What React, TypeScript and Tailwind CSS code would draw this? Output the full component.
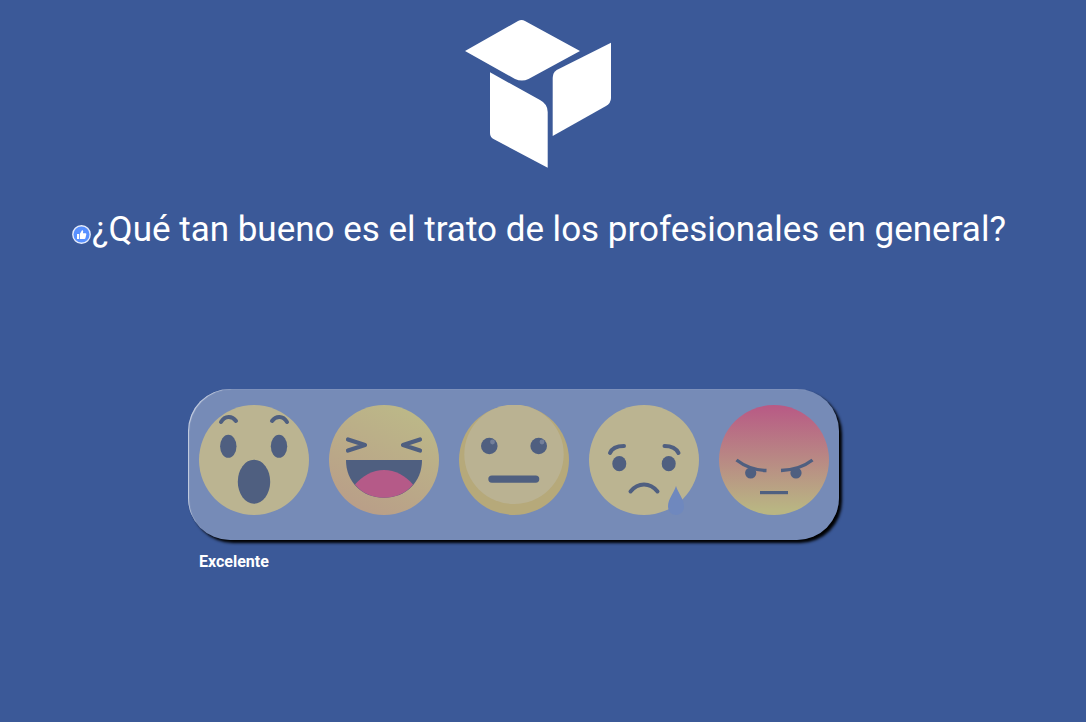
const INK = "#4f5f80";

function Wow() {
  return (
    <svg width="110" height="110" viewBox="0 0 110 110">
      <circle cx="55" cy="55" r="55" fill="#bbb491" />
      <path d="M22 17 C26 10.5 33 10.5 37 16" fill="none" stroke={INK} strokeWidth="4" strokeLinecap="round" />
      <path d="M73 16 C77 10.5 84 10.5 88 17" fill="none" stroke={INK} strokeWidth="4" strokeLinecap="round" />
      <ellipse cx="29.3" cy="41.3" rx="8.2" ry="11.5" fill={INK} />
      <ellipse cx="80" cy="41.3" rx="8.2" ry="11.5" fill={INK} />
      <ellipse cx="55" cy="76.7" rx="16.2" ry="22" fill={INK} />
    </svg>
  );
}

function Haha() {
  return (
    <svg width="110" height="110" viewBox="0 0 110 110">
      <defs>
        <linearGradient id="haha" x1="0.75" y1="0.05" x2="0.3" y2="0.95">
          <stop offset="0" stopColor="#bcb888" />
          <stop offset="1" stopColor="#b99f88" />
        </linearGradient>
      </defs>
      <circle cx="55" cy="55" r="55" fill="url(#haha)" />
      <path d="M19 34.5 L36 40 L19 45.5" fill="none" stroke={INK} strokeWidth="4.2" strokeLinecap="round" strokeLinejoin="round" />
      <path d="M91 34.5 L74 40 L91 45.5" fill="none" stroke={INK} strokeWidth="4.2" strokeLinecap="round" strokeLinejoin="round" />
      <path d="M17 55 H93 C93 77 77 92.7 55 92.7 C33 92.7 17 77 17 55 Z" fill={INK} />
      <path d="M26 79.5 C33 71 44 65 55 65 C66 65 77 71 84 79.5 C77 88 67 92.7 55 92.7 C43 92.7 33 88 26 79.5 Z" fill="#b55a88" />
    </svg>
  );
}

function Neutral() {
  return (
    <svg width="110" height="110" viewBox="0 0 110 110">
      <circle cx="55" cy="55" r="55" fill="#b6a97a" />
      <circle cx="55" cy="49.3" r="49.7" fill="#bab292" />
      <circle cx="30.3" cy="41" r="8.3" fill={INK} />
      <circle cx="79.7" cy="41" r="8.3" fill={INK} />
      <circle cx="33.5" cy="37" r="2.4" fill="#737f9a" />
      <circle cx="83" cy="37" r="2.4" fill="#737f9a" />
      <rect x="29.3" y="70.5" width="51" height="7.2" rx="3.6" fill={INK} />
    </svg>
  );
}

function Sad() {
  return (
    <svg width="110" height="110" viewBox="0 0 110 110">
      <circle cx="55" cy="55" r="55" fill="#bbb491" />
      <path d="M21 48 C23 43 29 41 35 41" fill="none" stroke={INK} strokeWidth="4" strokeLinecap="round" />
      <path d="M75.5 41 C81 41 87 43 89.5 48" fill="none" stroke={INK} strokeWidth="4" strokeLinecap="round" />
      <ellipse cx="30.3" cy="58.7" rx="7" ry="7.6" fill={INK} />
      <ellipse cx="79.7" cy="58.7" rx="7" ry="7.6" fill={INK} />
      <path d="M41.5 86.5 C46 81 50 79.5 55 79.5 C60 79.5 64 81 68.5 86.5" fill="none" stroke={INK} strokeWidth="4" strokeLinecap="round" />
      <path d="M87 81 C89 88 95 94 95 101.5 C95 106 91.5 110 87 110 C82.5 110 79 106 79 101.5 C79 94 85 88 87 81 Z" fill="#6f88be" />
    </svg>
  );
}

function Angry() {
  return (
    <svg width="110" height="110" viewBox="0 0 110 110">
      <defs>
        <linearGradient id="angry" x1="0" y1="0" x2="0" y2="1">
          <stop offset="0" stopColor="#b85985" />
          <stop offset="0.95" stopColor="#b9b583" />
        </linearGradient>
      </defs>
      <circle cx="55" cy="55" r="55" fill="url(#angry)" />
      <path d="M17.5 55 C24 60 32 65 47.5 65.5" fill="none" stroke={INK} strokeWidth="3.4" />
      <path d="M93.5 55 C87 60 78 65 62 65.5" fill="none" stroke={INK} strokeWidth="3.4" />
      <circle cx="31.7" cy="68" r="5.6" fill={INK} />
      <circle cx="77" cy="68" r="5.6" fill={INK} />
      <rect x="41" y="86" width="28" height="3.2" fill={INK} />
    </svg>
  );
}

export default function App() {
  return (
    <div className="h-[722px] overflow-hidden bg-[#3b5998] font-['Roboto',sans-serif] text-white">
      <div className="ml-[465px] pt-[18px]">
        <svg width="146" height="151" viewBox="0 0 146 151" className="block" fill="#fff">
          <path d="M0 33 L53 3 Q56.7 1.2 60 3 L115 33 L63.5 61 Q57 64 50 61 Z" />
          <path d="M146 24.7 V80 Q146 85 141 88 L87.7 118 V60 Q87.7 54.5 91.7 52 Z" />
          <path d="M25 54.3 L75 82 Q82.7 86 82.7 94 V149.7 L28.5 121 Q25 119 25 115 Z" />
        </svg>
      </div>
      <h1 className="ml-[72px] mt-[39px] flex h-[44px] items-center text-[35px] font-normal leading-[44px]">
        <svg width="19" height="19" viewBox="0 0 19 19" className="mt-[8px] mr-[1px] shrink-0">
          <circle cx="9.5" cy="9.5" r="8.7" fill="#5890ff" stroke="#e6ecfa" strokeWidth="1.4" />
          <path d="M5 9 H7 V14 H5 Z" fill="#fff" />
          <path d="M7.8 9 L10 5.2 Q11.2 5 11.2 6.6 L10.9 8.2 H13.6 Q14.6 8.4 14.3 9.5 L13.4 13.2 Q13.1 14 12.3 14 H7.8 Z" fill="#fff" />
        </svg>
        <span className="whitespace-nowrap">¿Qué tan bueno es el trato de los profesionales en general?</span>
      </h1>
      <div className="ml-[188px] mt-[137px] flex h-[151px] w-[651px] items-start gap-5 rounded-[42px] bg-white/30 pl-[11px] pt-[16px] shadow-[3px_3px_3px_#000,inset_2px_1px_1px_-1px_rgba(255,255,255,0.6)]">
        <Wow />
        <Haha />
        <Neutral />
        <Sad />
        <Angry />
      </div>
      <div className="ml-[199px] mt-[11px] text-[16px] font-bold leading-[22px]">Excelente</div>
    </div>
  );
}
